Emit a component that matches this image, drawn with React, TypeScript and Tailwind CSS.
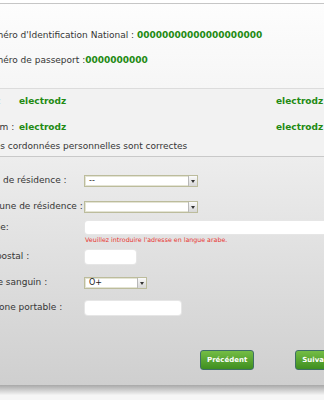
import React from 'react';

const SelectBox: React.FC<{ width: string; value: string }> = ({ width, value }) => (
  <div className={`${width} shrink-0 h-[12px] flex border border-[#bcbc9c] bg-white shadow-[inset_0_0_0_1px_#e4e4d4]`}>
    <span className="flex-1 pl-[4px] text-[8px] leading-[10px] text-[#222]">{value}</span>
    <span className="w-[9px] h-full flex items-center justify-center border-l border-[#b8b8b8] bg-gradient-to-b from-[#fafafa] to-[#d6d6d6]">
      <span className="w-0 h-0 border-l-[2px] border-r-[2px] border-t-[3px] border-l-transparent border-r-transparent border-t-[#333]" />
    </span>
  </div>
);

const TextBox: React.FC<{ width: string }> = ({ width }) => (
  <div className={`${width} shrink-0 h-full ml-[1px] rounded-[3px] bg-white shadow-[0_0_0_1px_#e6e6e6]`} />
);

const Label: React.FC<{ children: React.ReactNode }> = ({ children }) => (
  <span className="w-[114px] shrink-0">{children}</span>
);

function App() {
  return (
    <div className="w-[324px] h-[400px] overflow-hidden bg-[#f6f6f6] text-[9px] text-[#353535]" style={{ fontFamily: '"DejaVu Sans", Verdana, sans-serif' }}>
      <div className="h-[3px] bg-white" />

      {/* identité */}
      <div className="h-[86px] border-t border-b border-t-[#c6c6c6] border-b-[#dcdcdc] bg-gradient-to-b from-[#fdfdfd] to-[#f6f6f6] pt-[25px]">
        <div className="ml-[-18px] flex flex-col gap-[13px] leading-[12px] whitespace-nowrap">
          <div>
            Numéro d'Identification National : <b className="text-[#238a12]">00000000000000000000</b>
          </div>
          <div>
            Numéro de passeport :<b className="text-[#238a12]">0000000000</b>
          </div>
        </div>
      </div>

      {/* nom / prénom */}
      <div className="h-[68px] bg-[#f2f2f2] border-b border-[#c9c9c9] pt-[6px] whitespace-nowrap leading-[12px]">
        <div className="ml-[-26px] grid grid-cols-[45px_257px_1fr] items-center">
          <span>Nom :</span>
          <b className="text-[#238a12]">electrodz</b>
          <b className="text-[#238a12]">electrodz</b>
        </div>
        <div className="ml-[-26px] mt-[14px] grid grid-cols-[45px_257px_1fr] items-center">
          <span>Prénom :</span>
          <b className="text-[#238a12]">electrodz</b>
          <b className="text-[#238a12]">electrodz</b>
        </div>
        <div className="ml-[-13px] mt-[7px]">Mes cordonnées personnelles sont correctes</div>
      </div>

      {/* formulaire */}
      <div className="h-[228px] bg-gradient-to-b from-[#ededed] to-[#cfcfcf] pt-[18px] whitespace-nowrap">
        <div className="ml-[-30px]">
          <div className="flex items-center h-[12px]">
            <Label>Wilaya de résidence :</Label>
            <SelectBox width="w-[114px]" value="--" />
          </div>
          <div className="flex items-center h-[12px] mt-[14px]">
            <Label>Commune de résidence :</Label>
            <SelectBox width="w-[114px]" value="" />
          </div>
          <div className="flex items-center h-[13px] mt-[8px]">
            <Label>Adresse:</Label>
            <TextBox width="w-[260px]" />
          </div>
          <div className="pl-[115px] mt-[2px] text-[6.3px] leading-[8px] text-[#e8332f]">
            Veuillez introduire l'adresse en langue arabe.
          </div>
          <div className="flex items-center h-[14px] mt-[6px]">
            <Label>Code postal :</Label>
            <TextBox width="w-[51px]" />
          </div>
          <div className="flex items-center h-[12px] mt-[13px]">
            <Label>Groupe sanguin :</Label>
            <SelectBox width="w-[63px]" value="O+" />
          </div>
          <div className="flex items-center h-[14px] mt-[12px]">
            <Label>Téléphone portable :</Label>
            <TextBox width="w-[96px]" />
          </div>
        </div>
        <div className="flex gap-[41px] pl-[200px] mt-[35px]">
          <button className="h-[20px] px-[6px] rounded-[3px] border border-[#3f6f66] bg-gradient-to-b from-[#74bd45] to-[#3e8f1f] text-white text-[7px] font-bold">
            Précédent
          </button>
          <button className="h-[20px] px-[6px] rounded-[3px] border border-[#3f6f66] bg-gradient-to-b from-[#74bd45] to-[#3e8f1f] text-white text-[7px] font-bold">
            Suivant
          </button>
        </div>
      </div>

      <div className="h-[10px] bg-gradient-to-b from-[#a8a8a8] to-[#f4f4f4]" />
    </div>
  );
}

export default App;
